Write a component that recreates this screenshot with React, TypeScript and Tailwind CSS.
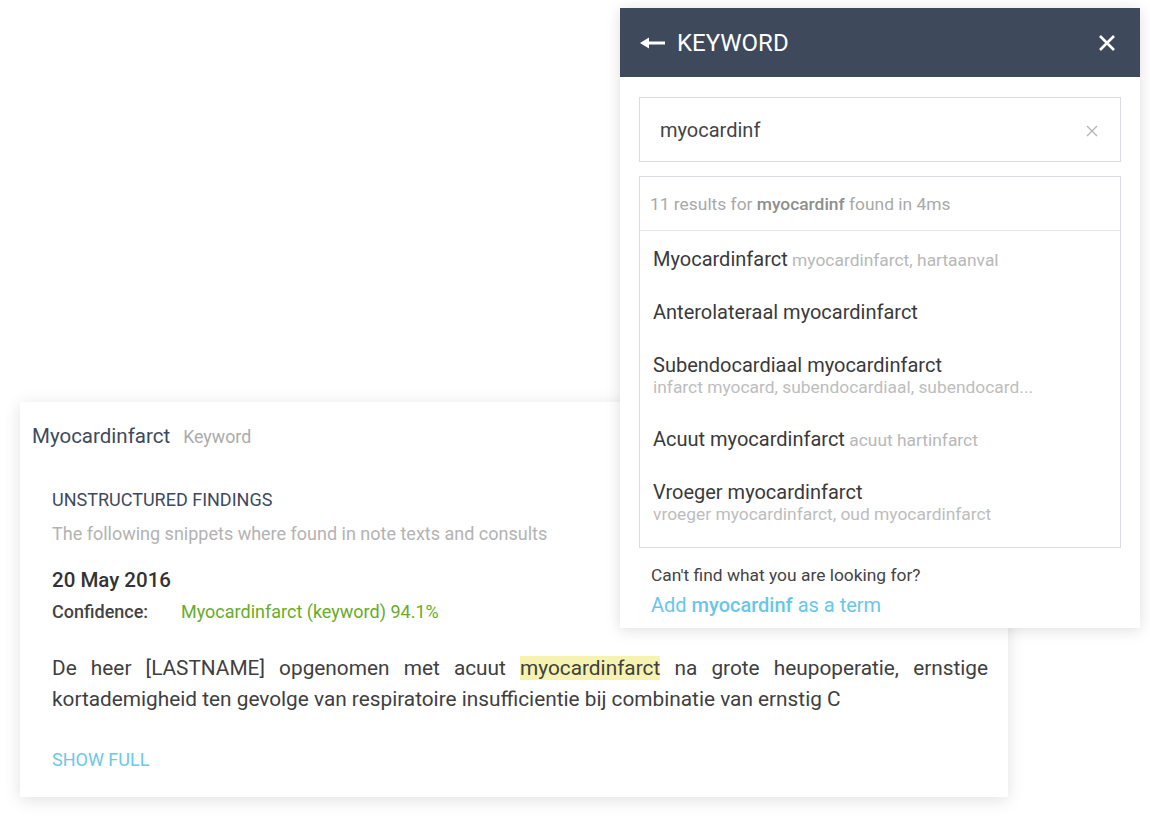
import React from 'react';

const results = [
  { term: 'Myocardinfarct', inline: 'myocardinfarct, hartaanval' },
  { term: 'Anterolateraal myocardinfarct' },
  { term: 'Subendocardiaal myocardinfarct', below: 'infarct myocard, subendocardiaal, subendocard...' },
  { term: 'Acuut myocardinfarct', inline: 'acuut hartinfarct' },
  { term: 'Vroeger myocardinfarct', below: 'vroeger myocardinfarct, oud myocardinfarct' },
];

const KeywordPanel = () => {
  return (
    <div className="absolute left-[620px] top-[8px] w-[520px] h-[620px] bg-white shadow-[0_2px_14px_rgba(0,0,0,0.13)]">
      <div className="h-[69px] bg-[#3e4a5c] flex items-center pl-[20px] pr-[24px] text-white">
        <svg width="25" height="14" viewBox="0 0 25 14" className="mr-[12px]">
          <rect x="7" y="5.5" width="18" height="3" fill="white" />
          <polygon points="0,7 9,1.5 9,12.5" fill="white" />
        </svg>
        <span className="text-[24px] leading-[28px]">KEYWORD</span>
        <button className="ml-auto">
          <svg width="18" height="18" viewBox="0 0 18 18">
            <path d="M2 2 L16 16 M16 2 L2 16" stroke="white" strokeWidth="2.6" strokeLinecap="butt" />
          </svg>
        </button>
      </div>

      <div className="px-[19px] pt-[20px]">
        <div className="h-[65px] border border-[#dcdde3] flex items-center pl-[20px] pr-[22px]">
          <span className="text-[20px] text-[#444]">myocardinf</span>
          <svg width="12" height="12" viewBox="0 0 12 12" className="ml-auto mt-[2px]">
            <path d="M1 1 L11 11 M11 1 L1 11" stroke="#b5b5b5" strokeWidth="1.4" />
          </svg>
        </div>

        <div className="mt-[14px] h-[372px] border border-[#dcdde3]">
          <div className="h-[54px] flex items-center pt-[2px] px-[10px] border-b border-[#e6e6ea] text-[17.4px] text-[#a9a9a9]">
            <span>
              11 results for <span className="font-medium text-[#8e8e8e]">myocardinf</span> found in 4ms
            </span>
          </div>
          {results.map((r) => (
            <div key={r.term} className="px-[13px] pt-[17px] pb-[13px]">
              <div className="h-[23px] text-[20px] leading-[23px] text-[#3a3a3a]">
                {r.term}
                {r.inline && <span className="text-[17.4px] leading-none text-[#b8b8b8]"> {r.inline}</span>}
              </div>
              {r.below && <div className="text-[17.4px] leading-[21px] text-[#bdbdbd]">{r.below}</div>}
            </div>
          ))}
        </div>

        <div className="pl-[12px] pt-[16px] text-[17.4px] leading-[22px] text-[#444]">Can't find what you are looking for?</div>
        <div className="pl-[12px] pt-[8px] text-[20px] leading-[22px] text-[#69c6e8]">
          Add <span className="font-medium">myocardinf</span> as a term
        </div>
      </div>
    </div>
  );
};

const FindingCard = () => {
  return (
    <div className="ml-[20px] w-[988px] h-[395px] bg-white shadow-[0_3px_16px_rgba(0,0,0,0.12)] pt-[22px]">
      <div className="px-[12px] flex items-baseline leading-[24px]">
        <span className="text-[20.5px] text-[#3e4a5c]">Myocardinfarct</span>
        <span className="ml-[13px] text-[17.8px] text-[#ababab]">Keyword</span>
      </div>

      <div className="pl-[32px] pr-[20px]">
        <div className="mt-[40px] text-[18px] leading-[22px] text-[#3e4a5c]">UNSTRUCTURED FINDINGS</div>
        <div className="mt-[12px] text-[18px] leading-[22px] text-[#b3b3b3]">
          The following snippets where found in note texts and consults
        </div>
        <div className="mt-[22px] text-[20.5px] leading-[26px] font-medium text-[#333]">20 May 2016</div>
        <div className="mt-[8px] flex text-[18px] leading-[22px]">
          <span className="w-[129px] font-medium text-[#444]">Confidence:</span>
          <span className="text-[#6aab2b]">Myocardinfarct (keyword) 94.1%</span>
        </div>

        <p className="mt-[30px] text-[20.8px] leading-[31px] text-[#404040] text-justify">
          De heer [LASTNAME] opgenomen met acuut <span className="bg-[#f6f3b0]">myocardinfarct</span> na grote
          heupoperatie, ernstige kortademigheid ten gevolge van respiratoire insufficientie bij combinatie van ernstig C
        </p>

        <div className="mt-[34px] text-[18px] leading-[22px] text-[#6cc7e8]">SHOW FULL</div>
      </div>
    </div>
  );
};

const App = () => {
  return (
    <div className="relative w-[1150px] h-[820px] bg-white overflow-hidden pt-[402px] font-['Roboto',sans-serif]">
      <FindingCard />
      <KeywordPanel />
    </div>
  );
};

export default App;
